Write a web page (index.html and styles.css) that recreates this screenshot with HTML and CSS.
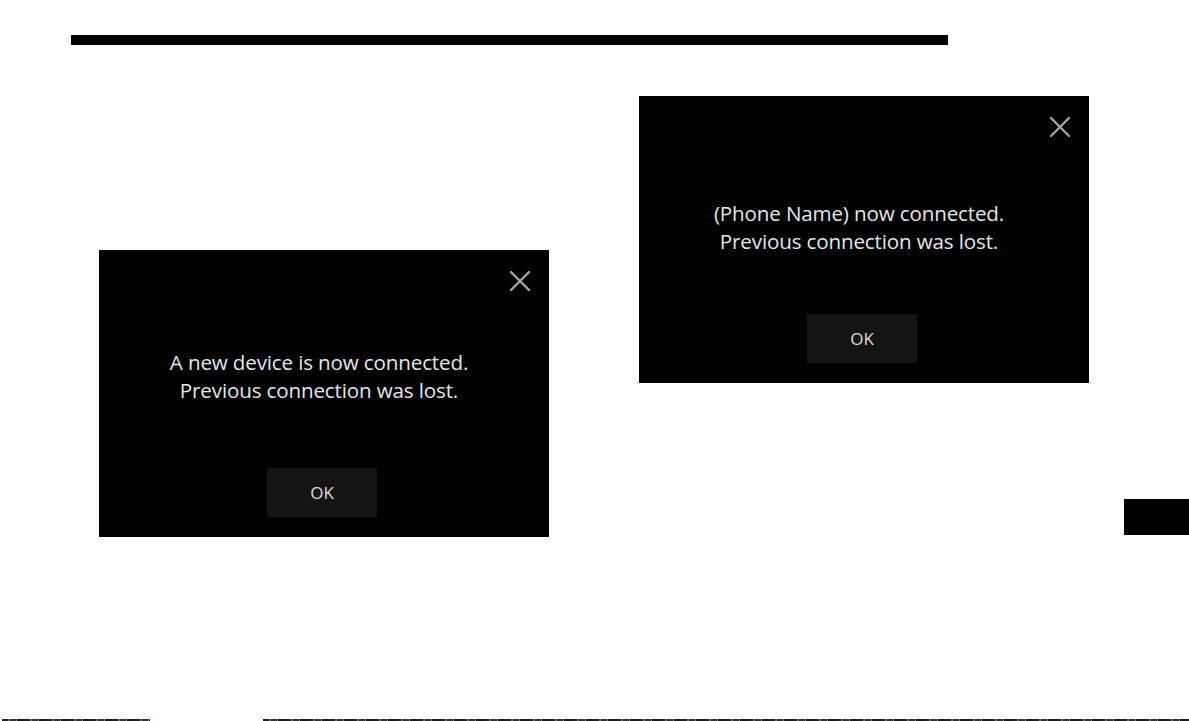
FILE: index.html
```html
<!DOCTYPE html>
<html lang="en">
<head>
<meta charset="utf-8">
<title>Connection dialogs</title>
<link rel="stylesheet" href="styles.css">
</head>
<body>
<div class="page">
  <div class="topbar"></div>
  <div class="content">
    <div class="panel panel-left">
      <svg class="close" width="22" height="22" viewBox="0 0 22 22" aria-hidden="true">
        <path d="M2 2 L20 20 M20 2 L2 20" stroke="#a4a4a4" stroke-width="2.4" stroke-linecap="round" fill="none"/>
      </svg>
      <div class="message">
        <div>A new device is now connected.</div>
        <div>Previous connection was lost.</div>
      </div>
      <div class="ok">OK</div>
    </div>
    <div class="panel panel-right">
      <svg class="close" width="22" height="22" viewBox="0 0 22 22" aria-hidden="true">
        <path d="M2 2 L20 20 M20 2 L2 20" stroke="#a4a4a4" stroke-width="2.4" stroke-linecap="round" fill="none"/>
      </svg>
      <div class="message">
        <div>(Phone Name) now connected.</div>
        <div>Previous connection was lost.</div>
      </div>
      <div class="ok">OK</div>
    </div>
    <div class="tab"></div>
  </div>
  <div class="footer">
    <div class="seg seg-a"></div>
    <div class="seg seg-b"></div>
  </div>
</div>
</body>
</html>
```
FILE: styles.css
```css
html, body {
  margin: 0;
  padding: 0;
  background: #ffffff;
}

.page {
  width: 1189px;
  height: 721px;
  display: flex;
  flex-direction: column;
  overflow: hidden;
}

.topbar {
  margin: 35px 0 0 71px;
  width: 877px;
  height: 10px;
  background: #000;
}

.content {
  display: flex;
  align-items: flex-start;
  margin-top: 51px;
  padding-left: 99px;
}

.panel {
  position: relative;
  width: 450px;
  height: 287px;
  background: #000;
  display: flex;
  flex-direction: column;
  font-family: "Open Sans", "Liberation Sans", sans-serif;
  color: #e6e6e6;
}

.panel-left {
  margin-top: 154px;
}

.panel-right {
  margin-left: 90px;
}

.close {
  position: absolute;
  top: 20px;
  right: 18px;
}

.message {
  margin-top: 98px;
  padding-right: 10px;
  font-size: 20.6px;
  line-height: 28px;
  text-align: center;
  letter-spacing: -0.15px;
}

.panel-right .message {
  margin-top: 103px;
}

.ok {
  margin-top: auto;
  margin-bottom: 20px;
  margin-left: 168px;
  width: 110px;
  height: 49px;
  background: #141414;
  display: flex;
  align-items: center;
  justify-content: center;
  font-size: 17px;
  color: #dedede;
}

.tab {
  margin-left: 35px;
  margin-top: 403px;
  width: 65px;
  height: 36px;
  background: #000;
}

.footer {
  margin-top: auto;
  height: 2px;
  display: flex;
}

.seg {
  height: 2px;
  background: repeating-linear-gradient(90deg, #222 0 6px, #4a6aa0 6px 8px, #333 8px 14px, #9a7a40 14px 15px, #1a1a1a 15px 22px);
}

.seg-a {
  margin-left: 2px;
  width: 148px;
}

.seg-b {
  margin-left: 113px;
  flex: 1;
}
```
